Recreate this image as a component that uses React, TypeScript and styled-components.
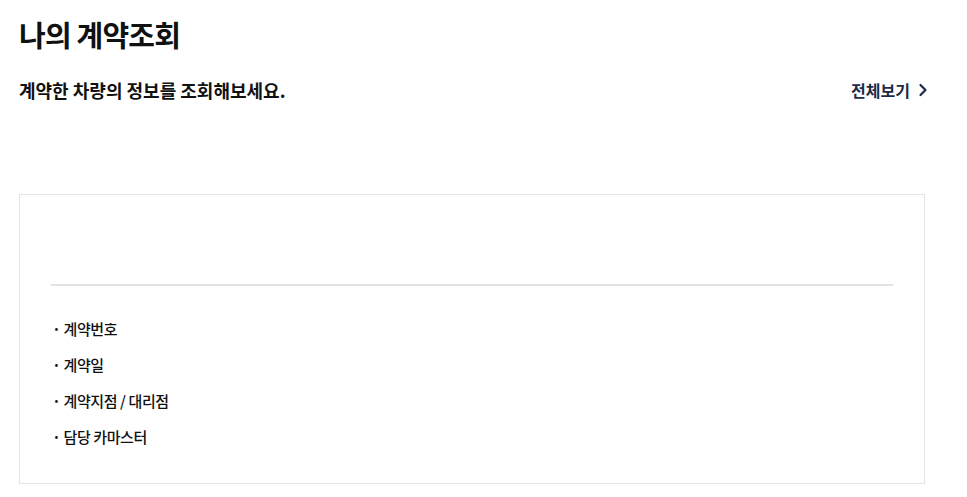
import React from "react";
import styled, { createGlobalStyle } from "styled-components";

const Global = createGlobalStyle`
  html, body { margin: 0; padding: 0; background: #fff; }
  body { font-family: "Noto Sans CJK KR", "Noto Sans", sans-serif; color: #111; }
`;

const Page = styled.div`
  padding: 14px 42px 0 19px;
  width: 967px;
  box-sizing: border-box;
`;

const Title = styled.h1`
  margin: 0;
  font-size: 29px;
  font-weight: 700;
  letter-spacing: -0.8px;
  line-height: 40px;
  color: #111;
`;

const SubRow = styled.div`
  display: flex;
  align-items: center;
  justify-content: space-between;
  margin-top: 24px;
`;

const Subtitle = styled.p`
  margin: 0;
  font-size: 18px;
  font-weight: 700;
  letter-spacing: 0;
  line-height: 24px;
  color: #111;
`;

const ViewAll = styled.a`
  display: flex;
  align-items: center;
  gap: 8px;
  font-size: 16px;
  font-weight: 700;
  letter-spacing: 0;
  color: #1b2b48;
  text-decoration: none;
  margin-right: -3px;
`;

const Card = styled.section`
  margin-top: 92px;
  width: 906px;
  box-sizing: border-box;
  border: 1px solid #e4e4e4;
  padding: 0 31px 36px;
`;

const CardHead = styled.div`
  height: 89px;
  border-bottom: 2px solid #e2e2e2;
`;

const List = styled.ul`
  list-style: none;
  margin: 0;
  padding: 32px 0 0 1px;
  display: flex;
  flex-direction: column;
  gap: 15px;
`;

const Item = styled.li`
  font-size: 15px;
  font-weight: 500;
  line-height: 21px;
  letter-spacing: -0.4px;
  color: #111;
  &::before {
    content: "·";
    margin-right: 3px;
    font-weight: 700;
  }
`;

const items = ["계약번호", "계약일", "계약지점 / 대리점", "담당 카마스터"];

export default function App() {
  return (
    <Page>
      <Global />
      <Title>나의 계약조회</Title>
      <SubRow>
        <Subtitle>계약한 차량의 정보를 조회해보세요.</Subtitle>
        <ViewAll href="#">
          전체보기
          <svg width="10" height="14" viewBox="0 0 10 14" fill="none">
            <path d="M2.5 2 L7.5 7 L2.5 12" stroke="#1b2b48" strokeWidth="2.2" strokeLinecap="round" strokeLinejoin="round" />
          </svg>
        </ViewAll>
      </SubRow>
      <Card>
        <CardHead />
        <List>
          {items.map((t) => (
            <Item key={t}>{t}</Item>
          ))}
        </List>
      </Card>
    </Page>
  );
}
